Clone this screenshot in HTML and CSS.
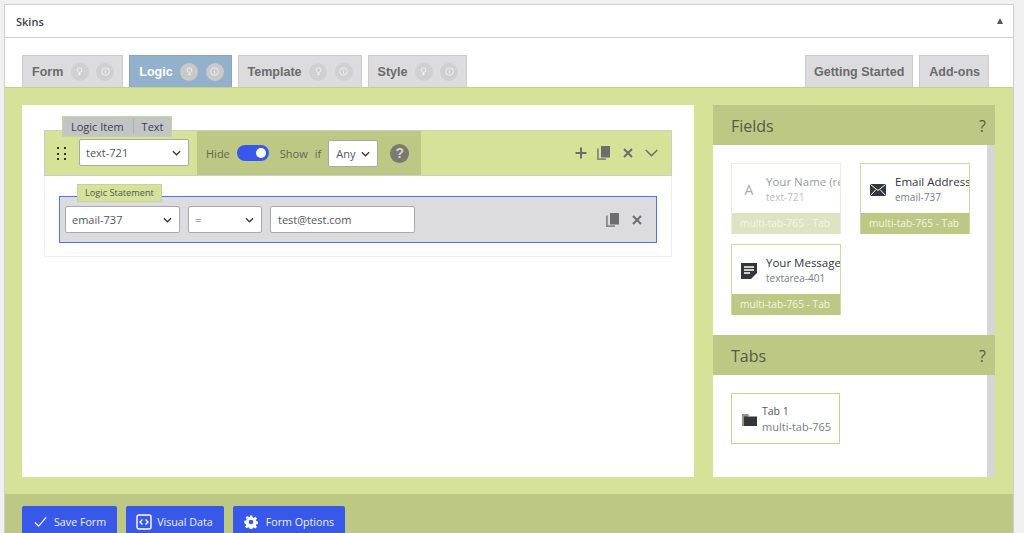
FILE: index.html
```html
<!DOCTYPE html>
<html>
<head>
    <title>Skins</title>
    <link rel="stylesheet" href="styles.css">
</head>
<body>
    <div class="postbox">
        <div class="postbox-head">
            <h2>Skins</h2>
            <span class="toggle-arrow"></span>
        </div>

        <div class="tabs">
            <div class="tab">Form
                <span class="tab-dot"><svg viewBox="0 0 16 16"><circle cx="8" cy="6" r="3.4"/><path d="M8 9.5v4M6 12h4"/></svg></span>
                <span class="tab-dot"><svg viewBox="0 0 16 16"><circle cx="8" cy="8" r="5.5"/><path d="M8 7v4M8 4.6v1"/></svg></span>
            </div>
            <div class="tab active">Logic
                <span class="tab-dot"><svg viewBox="0 0 16 16"><circle cx="8" cy="6" r="3.4"/><path d="M8 9.5v4M6 12h4"/></svg></span>
                <span class="tab-dot"><svg viewBox="0 0 16 16"><circle cx="8" cy="8" r="5.5"/><path d="M8 7v4M8 4.6v1"/></svg></span>
            </div>
            <div class="tab">Template
                <span class="tab-dot"><svg viewBox="0 0 16 16"><circle cx="8" cy="6" r="3.4"/><path d="M8 9.5v4M6 12h4"/></svg></span>
                <span class="tab-dot"><svg viewBox="0 0 16 16"><circle cx="8" cy="8" r="5.5"/><path d="M8 7v4M8 4.6v1"/></svg></span>
            </div>
            <div class="tab">Style
                <span class="tab-dot"><svg viewBox="0 0 16 16"><circle cx="8" cy="6" r="3.4"/><path d="M8 9.5v4M6 12h4"/></svg></span>
                <span class="tab-dot"><svg viewBox="0 0 16 16"><circle cx="8" cy="8" r="5.5"/><path d="M8 7v4M8 4.6v1"/></svg></span>
            </div>
            <div class="tab tab-plain tab-right">Getting Started</div>
            <div class="tab tab-plain tab-addons">Add-ons</div>
        </div>

        <div class="workspace">
            <div class="canvas">
                <div class="logic-item">
                    <div class="item-tag"><span>Logic Item</span><span>Text</span></div>
                    <div class="item-head">
                        <div class="drag-grip"><i></i><i></i><i></i><i></i><i></i><i></i></div>
                        <div class="fake-select select-field">text-721<svg class="chev" viewBox="0 0 10 6"><path d="M1 1l4 4 4-4"/></svg></div>
                        <div class="condition">
                            <span class="cond-label">Hide</span>
                            <span class="switch"><span class="knob"></span></span>
                            <span class="cond-label">Show</span>
                            <span class="cond-label if-label">if</span>
                            <div class="fake-select select-any">Any<svg class="chev" viewBox="0 0 10 6"><path d="M1 1l4 4 4-4"/></svg></div>
                            <span class="help-badge">?</span>
                        </div>
                        <div class="item-actions">
                            <svg class="act-icon plus-icon" viewBox="0 0 12 12"><path class="thick" d="M6 .5v11M.5 6h11"/></svg>
                            <svg class="act-icon copy-icon" viewBox="0 0 13 14"><path class="solid" d="M4 0h9v11.500H4z"/><path class="solid-back" d="M0 2.500h1.800V12.200H9V14H0z"/></svg>
                            <svg class="act-icon close-icon" viewBox="0 0 10 10"><path class="thick" d="M1 1l8 8M9 1l-8 8"/></svg>
                            <svg class="act-icon chev-big" viewBox="0 0 12 7"><path d="M.7.7L6 6l5.300-5.300"/></svg>
                        </div>
                    </div>
                    <div class="item-body">
                        <div class="statement">
                            <div class="statement-tag">Logic Statement</div>
                            <div class="fake-select select-email">email-737<svg class="chev" viewBox="0 0 10 6"><path d="M1 1l4 4 4-4"/></svg></div>
                            <div class="fake-select select-op">=<svg class="chev" viewBox="0 0 10 6"><path d="M1 1l4 4 4-4"/></svg></div>
                            <div class="fake-input">test@test.com</div>
                            <div class="statement-actions">
                                <svg class="act-icon copy-icon" viewBox="0 0 13 14"><path class="solid" d="M4 0h9v11.500H4z"/><path class="solid-back" d="M0 2.500h1.800V12.200H9V14H0z"/></svg>
                                <svg class="act-icon close-icon" viewBox="0 0 10 10"><path class="thick" d="M1 1l8 8M9 1l-8 8"/></svg>
                            </div>
                        </div>
                    </div>
                </div>
            </div>

            <div class="sidebar">
                <div class="side-head"><span>Fields</span><span class="side-help">?</span></div>
                <div class="side-body fields-body">
                    <div class="field-card used">
                        <div class="card-main">
                            <span class="letter-icon">A</span>
                            <div class="card-text"><div class="card-title">Your Name (required)</div><div class="card-sub">text-721</div></div>
                        </div>
                        <div class="card-foot">multi-tab-765 - Tab</div>
                    </div>
                    <div class="field-card">
                        <div class="card-main">
                            <svg class="card-icon" viewBox="0 0 16 12"><path fill="#32373c" d="M0 0h16v12H0z"/><path d="M.5.500L8 6.500 15.500.500M.5 11.500L6 5.500M15.500 11.500L10 5.500" fill="none" stroke="#fff" stroke-width="1"/></svg>
                            <div class="card-text"><div class="card-title">Email Address (required)</div><div class="card-sub">email-737</div></div>
                        </div>
                        <div class="card-foot">multi-tab-765 - Tab</div>
                    </div>
                    <div class="field-card">
                        <div class="card-main">
                            <svg class="card-icon" viewBox="0 0 16 16"><path fill="#32373c" d="M0 0h16v10l-6 6H0z"/><path d="M3 4h10M3 7h10M3 10h6" fill="none" stroke="#fff" stroke-width="1.300"/></svg>
                            <div class="card-text"><div class="card-title">Your Message</div><div class="card-sub">textarea-401</div></div>
                        </div>
                        <div class="card-foot">multi-tab-765 - Tab</div>
                    </div>
                </div>
                <div class="side-head"><span>Tabs</span><span class="side-help">?</span></div>
                <div class="side-body tabs-body">
                    <div class="tab-card">
                        <svg class="folder-icon" viewBox="0 0 15 12"><path fill="#9a8f80" d="M0 0h6l1.500 2H6v10H0z"/><path fill="#32373c" d="M2 2.500h13V12H2z"/></svg>
                        <div class="card-text"><div class="tab-title">Tab 1</div><div class="card-sub">multi-tab-765</div></div>
                    </div>
                </div>
            </div>
        </div>

        <div class="footer-bar">
            <div class="btn btn-save">
                <svg class="btn-icon" viewBox="0 0 14 12"><path d="M1 6.500l4 4L13 1" fill="none" stroke="#fff" stroke-width="1.300"/></svg>Save Form
            </div>
            <div class="btn btn-data">
                <svg class="btn-icon code-icon" viewBox="0 0 16 16"><rect x="1" y="1" width="14" height="14" rx="2" fill="none" stroke="#fff" stroke-width="1.400"/><path d="M6.500 5.500L4 8l2.500 2.500M9.500 5.500L12 8l-2.500 2.500" fill="none" stroke="#fff" stroke-width="1.400"/></svg>Visual Data
            </div>
            <div class="btn btn-options">
                <svg class="btn-icon gear-icon" viewBox="0 0 24 24"><path fill="#fff" fill-rule="evenodd" d="M10 1h4l.7 3.200 1.900.8 2.800-1.800 2.800 2.800-1.800 2.800.8 1.900 3.200.3v4l-3.200.7-.8 1.900 1.800 2.800-2.800 2.800-2.800-1.800-1.900.8-.7 2.800h-4l-.7-3.200-1.900-.8-2.800 1.800-2.800-2.800 1.800-2.800-.8-1.900L.6 14v-4l3.200-.7.8-1.900-1.800-2.800 2.800-2.800 2.800 1.800 1.900-.8zM12 8a4 4 0 100 8 4 4 0 000-8z"/></svg>Form Options
            </div>
        </div>
    </div>
</body>
</html>
```

FILE: styles.css
```css
html, body {
    margin: 0;
    height: 533px;
    overflow: hidden;
}
body {
    background: #f0f0f1;
    font-family: "Open Sans", "Noto Sans", sans-serif;
    color: #50575e;
    padding: 4px 10px 0 4px;
    box-sizing: border-box;
}
.postbox {
    background: #fff;
    border: 1px solid #ccd0d4;
    border-bottom: none;
}
.postbox-head {
    height: 32px;
    border-bottom: 1px solid #ccd0d4;
    display: flex;
    align-items: center;
    justify-content: space-between;
    padding: 0 10px 0 11px;
}
.postbox-head h2 {
    margin: 0;
    font-size: 11px;
    font-weight: 600;
    color: #3c434a;
}
.toggle-arrow {
    width: 0;
    height: 0;
    border-left: 3.5px solid transparent;
    border-right: 3.5px solid transparent;
    border-bottom: 6px solid #50575e;
}
.tabs {
    display: flex;
    gap: 6px;
    padding: 17px 24px 0 17px;
    height: 32px;
}
.tab {
    display: flex;
    align-items: center;
    height: 32px;
    box-sizing: border-box;
    padding: 0 8px 0 9px;
    background: #dcdcde;
    border: 1px solid #ccc;
    border-bottom: none;
    font-family: "Liberation Sans", Arial, sans-serif;
    font-size: 12.500px;
    font-weight: 700;
    color: #6b6b6b;
}
.tab-plain {
    padding: 0 8px;
}
.tab-addons {
    padding-left: 9px;
}
.tab.active {
    background: #93b0cc;
    border-color: #86a5c4;
    color: #fff;
    padding-right: 7px;
}
.tab-right {
    margin-left: auto;
}
.tab-dot {
    width: 18px;
    height: 18px;
    border-radius: 50%;
    background: #d0d0d2;
    margin-left: 7.500px;
    display: flex;
    align-items: center;
    justify-content: center;
}
.tab.active .tab-dot {
    background: #c9c9c9;
}
.tab-dot svg {
    width: 11px;
    height: 11px;
    fill: none;
    stroke: #f2f2f2;
    stroke-width: 1.300;
}
.workspace {
    background: #d5e298;
    height: 407px;
    box-sizing: border-box;
    padding: 17px 18px 17px 17px;
    display: flex;
    gap: 19px;
    border-top: 1px solid #c5d08c;
}
.canvas {
    width: 672px;
    background: #fff;
    box-sizing: border-box;
    padding: 25px 22px 0 22px;
}
.logic-item {
    position: relative;
}
.item-tag {
    position: absolute;
    left: 18px;
    top: -14px;
    height: 21px;
    box-sizing: border-box;
    background: #c3c4c7;
    border: 1px solid #c9d491;
    display: flex;
    align-items: center;
    font-size: 11px;
    color: #3c434a;
}
.item-tag span {
    padding: 0 9px 0 8px;
    line-height: 15px;
}
.item-tag span + span {
    border-left: 1px solid #b0b0b0;
    padding: 0 7px 0 8px;
}
.item-head {
    height: 46px;
    box-sizing: border-box;
    background: #d5e298;
    border: 1px solid #ccc;
    display: flex;
    align-items: stretch;
}
.drag-grip {
    width: 9px;
    height: 13px;
    margin: 16px 0 0 12px;
    display: grid;
    grid-template-columns: 2px 2px;
    column-gap: 5px;
    align-content: space-between;
}
.drag-grip i {
    width: 2px;
    height: 2px;
    background: #333;
}
.fake-select {
    position: relative;
    background: #fff;
    border: 1px solid #a7aaad;
    border-radius: 2px;
    box-sizing: border-box;
    height: 27px;
    line-height: 25px;
    font-size: 11px;
    color: #50575e;
    padding-left: 6px;
}
.chev {
    position: absolute;
    right: 7px;
    top: 10px;
    width: 9px;
    height: 6px;
    fill: none;
    stroke: #32373c;
    stroke-width: 1.400;
}
.select-field {
    width: 110px;
    margin: 8px 8px 0 13px;
}
.condition {
    width: 224px;
    background: #bdc885;
    display: flex;
    align-items: center;
    padding-left: 9px;
    box-sizing: border-box;
}
.cond-label {
    font-size: 11px;
    color: #5f6650;
}
.switch {
    width: 32px;
    height: 16px;
    border-radius: 8px;
    background: #3858e9;
    margin: 0 11px 0 7px;
    position: relative;
}
.knob {
    position: absolute;
    right: 3px;
    top: 3px;
    width: 10px;
    height: 10px;
    border-radius: 50%;
    background: #fff;
}
.if-label {
    margin-left: 7px;
}
.select-any {
    width: 50px;
    margin-left: 7px;
    padding-left: 7px;
}
.help-badge {
    width: 19px;
    height: 19px;
    border-radius: 50%;
    background: #7a7a70;
    color: #d5d5cc;
    font-family: "Liberation Sans", Arial, sans-serif;
    font-size: 14px;
    font-weight: 700;
    text-align: center;
    line-height: 19px;
    margin-left: 12px;
}
.item-actions {
    flex: 1;
    display: flex;
    align-items: center;
    justify-content: flex-end;
    gap: 11px;
    padding-right: 13px;
}
.act-icon {
    fill: none;
    stroke: #6d6d6d;
}
.act-icon .thick {
    stroke-width: 2;
}
.act-icon .solid {
    fill: #6d6d6d;
    stroke: none;
}
.act-icon .solid-back {
    fill: #8a8a80;
    stroke: none;
}
.plus-icon {
    width: 12px;
    height: 12px;
    margin-right: -1px;
}
.copy-icon {
    width: 13px;
    height: 14px;
}
.close-icon {
    width: 10px;
    height: 10px;
    margin-left: 2px;
}
.chev-big {
    width: 13px;
    height: 8px;
    stroke-width: 1.500;
    margin-left: 1px;
}
.item-body {
    height: 81px;
    box-sizing: border-box;
    border: 1px solid #eee;
    border-top: none;
    padding: 20px 14px 0 14px;
}
.statement {
    position: relative;
    height: 47px;
    box-sizing: border-box;
    background: #dcdcde;
    border: 1px solid #4b74f0;
    display: flex;
    align-items: center;
    padding-left: 5px;
}
.statement-tag {
    position: absolute;
    left: 17px;
    top: -13px;
    height: 18px;
    box-sizing: border-box;
    padding: 0 7px;
    background: #d5e298;
    border: 1px solid #c8cfa8;
    font-size: 9.200px;
    line-height: 16px;
    color: #50575e;
}
.select-email {
    width: 115px;
}
.select-op {
    width: 74px;
    margin-left: 8px;
}
.fake-input {
    width: 145px;
    height: 27px;
    line-height: 25px;
    box-sizing: border-box;
    margin-left: 8px;
    padding-left: 7px;
    background: #fff;
    border: 1px solid #a7aaad;
    border-radius: 2px;
    font-size: 11px;
}
.statement-actions {
    margin-left: auto;
    display: flex;
    align-items: center;
    gap: 11px;
    padding-right: 14px;
}
.sidebar {
    width: 282px;
}
.side-head {
    height: 40px;
    box-sizing: border-box;
    padding: 1px 9px 0 18px;
    background: #bdc885;
    display: flex;
    align-items: center;
    justify-content: space-between;
    font-size: 16px;
    color: #555b45;
}
.side-help {
    font-size: 16px;
}
.side-body {
    width: 282px;
    box-sizing: border-box;
    background: #fff;
    border-right: 8px solid #d6d6d6;
    padding: 18px 0 0 18px;
}
.fields-body {
    height: 190px;
    display: grid;
    grid-template-columns: 110px 110px;
    column-gap: 19px;
    row-gap: 10px;
    align-content: start;
}
.tabs-body {
    height: 102px;
}
.field-card {
    width: 110px;
    height: 71px;
    box-sizing: border-box;
    border: 1px solid #d0d6ac;
    border-bottom: none;
    overflow: hidden;
    display: flex;
    flex-direction: column;
}
.card-main {
    height: 50px;
    box-sizing: border-box;
    padding: 2px 0 0 9px;
    display: flex;
    align-items: center;
    white-space: nowrap;
}
.card-foot {
    background: #bdc885;
    height: 21px;
    line-height: 21px;
    margin: 0 -1px;
    padding-left: 9px;
    font-size: 10.200px;
    color: #f3f6e3;
}
.field-card.used {
    border-color: #ecefdc;
}
.field-card.used .card-main {
    opacity: .5;
}
.field-card.used .card-foot {
    background: #dee4c2;
}
.letter-icon {
    width: 16px;
    flex: none;
    font-size: 14px;
    color: #50575e;
    text-align: center;
}
.card-icon {
    width: 16px;
    height: 16px;
    flex: none;
}
.card-text {
    margin-left: 9px;
}
.card-title {
    font-size: 11.500px;
    line-height: 16px;
    color: #32373c;
}
.card-sub {
    font-size: 10px;
    line-height: 15px;
    color: #787c82;
}
.tab-card {
    width: 109px;
    height: 51px;
    box-sizing: border-box;
    border: 1px solid #c9d09e;
    display: flex;
    align-items: center;
    padding: 2px 0 0 10px;
}
.folder-icon {
    width: 15px;
    height: 12px;
    flex: none;
}
.tab-card .card-text {
    margin-left: 5px;
}
.tab-card .card-sub {
    font-size: 11px;
    line-height: 16px;
}
.tab-title {
    font-size: 10.500px;
    line-height: 15px;
    color: #50575e;
}
.footer-bar {
    background: #bdc885;
    height: 50px;
    box-sizing: border-box;
    padding: 12px 0 0 17px;
    display: flex;
    gap: 9px;
}
.btn {
    height: 40px;
    box-sizing: border-box;
    padding: 0 11px 8px 12px;
    background: #3858e9;
    border-radius: 2px;
    color: #f0f0f8;
    font-size: 10.700px;
    display: flex;
    align-items: center;
}
.btn-data {
    padding-left: 10px;
}
.btn-options {
    padding-left: 11px;
}
.btn-icon {
    width: 13px;
    height: 12px;
    margin-right: 7px;
}
.code-icon {
    width: 16px;
    height: 16px;
    margin-right: 5px;
}
.gear-icon {
    width: 14px;
    height: 14px;
    margin-right: 8px;
}
```
